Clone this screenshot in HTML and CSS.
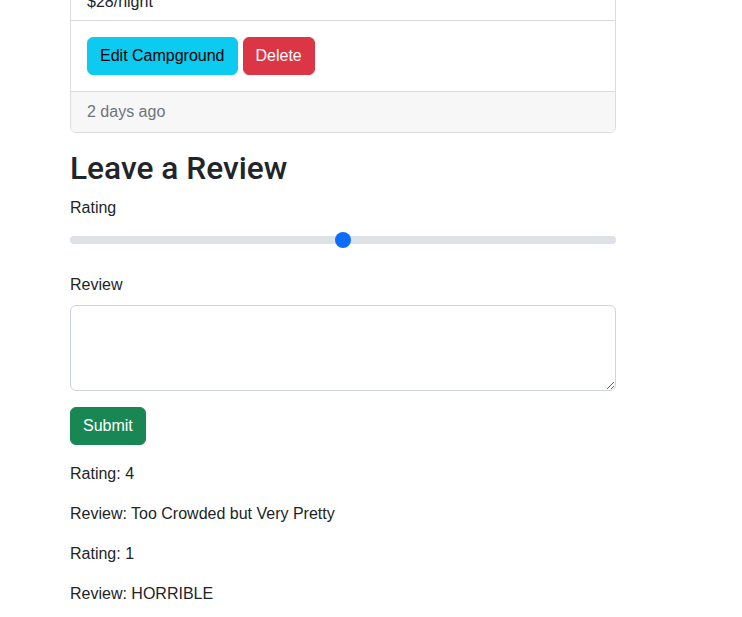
FILE: index.html
```html
<!DOCTYPE html>
<html lang="en">
<head>
<meta charset="utf-8">
<title>Campground</title>
<link rel="stylesheet" href="styles.css">
</head>
<body>
<div class="page">
  <div class="card">
    <ul class="list-group">
      <li class="list-group-item">$28/night</li>
    </ul>
    <div class="card-body">
      <a class="btn btn-info" href="#">Edit Campground</a>
      <form class="inline-form">
        <button class="btn btn-danger" type="button">Delete</button>
      </form>
    </div>
    <div class="card-footer">2 days ago</div>
  </div>

  <h1 class="review-title">Leave a Review</h1>
  <form class="review-form">
    <div class="field field-range">
      <label class="form-label" for="rating">Rating</label>
      <input class="form-range" type="range" min="1" max="5" value="3" id="rating">
    </div>
    <div class="field">
      <label class="form-label" for="body">Review</label>
      <textarea class="form-control" id="body" rows="3"></textarea>
    </div>
    <button class="btn btn-success" type="button">Submit</button>
  </form>

  <div class="reviews">
    <p>Rating: 4</p>
    <p>Review: Too Crowded but Very Pretty</p>
    <p>Rating: 1</p>
    <p>Review: HORRIBLE</p>
  </div>
</div>
</body>
</html>
```

FILE: styles.css
```css
* { box-sizing: border-box; }

html, body {
  margin: 0;
  background: #fff;
}

body {
  font-family: "Liberation Sans", Arial, sans-serif;
  font-size: 16px;
  line-height: 1.5;
  color: #212529;
}

.page {
  width: 546px;
  margin-left: 70px;
  margin-top: -21px;
}

.card {
  border: 1px solid #dcdcdc;
  border-radius: 6px;
  margin-bottom: 16px;
  overflow: hidden;
}

.list-group {
  list-style: none;
  margin: 0;
  padding: 0;
}

.list-group-item {
  padding: 10px 16px 6px;
  border-bottom: 1px solid #dcdcdc;
}

.card-body {
  padding: 16px;
  display: flex;
  gap: 5px;
}

.inline-form { margin: 0; display: flex; }

.card-footer {
  padding: 8px 16px;
  background: #f7f7f7;
  border-top: 1px solid #dcdcdc;
  color: #6c757d;
}

.btn {
  display: inline-block;
  font-family: inherit;
  font-size: 16px;
  line-height: 24px;
  padding: 6px 12px;
  border: 1px solid transparent;
  border-radius: 6px;
  text-decoration: none;
  cursor: pointer;
}

.btn-info { background: #0dcaf0; border-color: #0dcaf0; color: #000; }
.btn-danger { background: #dc3545; border-color: #dc3545; color: #fff; }
.btn-success { background: #198754; border-color: #198754; color: #fff; }

.review-title {
  font-family: Roboto, "Liberation Sans", Arial, sans-serif;
  font-size: 31.7px;
  font-weight: 500;
  line-height: 39.7px;
  margin: 1px 0 7px;
}

.review-form {
  margin: 0 0 17px;
}

.field { margin-bottom: 16px; }
.field-range { margin-bottom: 21px; }

.form-label {
  display: inline-block;
  margin-bottom: 8px;
}

.form-range {
  display: block;
  width: 100%;
  height: 24px;
  margin: 0;
  padding: 0;
  background: transparent;
  -webkit-appearance: none;
  appearance: none;
}

.form-range::-webkit-slider-runnable-track {
  height: 8px;
  background: #dee2e6;
  border-radius: 16px;
  border: 0;
}

.form-range::-webkit-slider-thumb {
  -webkit-appearance: none;
  appearance: none;
  width: 16px;
  height: 16px;
  margin-top: -4px;
  border: 0;
  border-radius: 50%;
  background: #0d6efd;
}

.form-range::-moz-range-track {
  height: 8px;
  background: #dee2e6;
  border-radius: 16px;
}

.form-range::-moz-range-thumb {
  width: 16px;
  height: 16px;
  border: 0;
  border-radius: 50%;
  background: #0d6efd;
}

.form-control {
  display: block;
  width: 100%;
  height: 86px;
  padding: 6px 12px;
  font-family: inherit;
  font-size: 16px;
  line-height: 24px;
  color: #212529;
  border: 1px solid #ced4da;
  border-radius: 6px;
  resize: vertical;
}

.reviews p {
  margin: 0 0 16px;
}
```
